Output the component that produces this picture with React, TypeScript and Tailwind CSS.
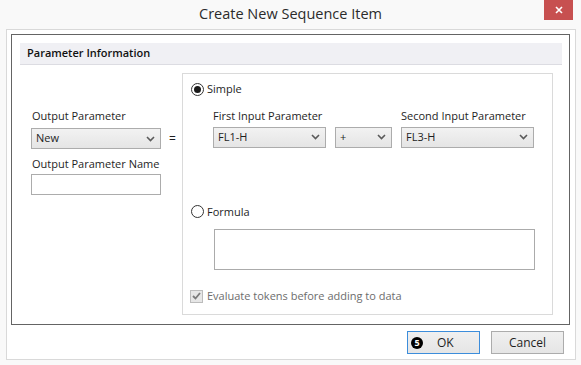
import React from 'react';

const font = { fontFamily: '"Open Sans", "Noto Sans", sans-serif' };

const Chevron = () => (
  <svg width="9" height="6" viewBox="0 0 9 6" className="shrink-0">
    <path d="M1 1 L4.5 4.5 L8 1" fill="none" stroke="#5a5a5a" strokeWidth="1.6" />
  </svg>
);

interface SelectProps {
  value: string;
  width: string;
}

const FakeSelect: React.FC<SelectProps> = ({ value, width }) => (
  <div
    className={`${width} h-[21px] flex items-center justify-between pl-[4px] pr-[5px] border border-[#acacac] bg-gradient-to-b from-[#f2f2f2] to-[#e5e5e5] text-[11px] text-[#1e1e1e]`}
  >
    <span>{value}</span>
    <Chevron />
  </div>
);

const Radio: React.FC<{ checked?: boolean }> = ({ checked }) => (
  <div className="w-[13px] h-[13px] rounded-full border border-[#333] bg-white flex items-center justify-center">
    {checked && <div className="w-[7px] h-[7px] rounded-full bg-[#1a1a1a]" />}
  </div>
);

export default function App() {
  return (
    <div className="w-[581px] h-[365px] bg-[#f9f9f9] flex flex-col text-[#1e1e1e]" style={font}>
      <div className="relative h-[29px] flex items-center justify-center">
        <span className="text-[14.5px] text-[#2b2b2b] leading-none -mt-[1px]">Create New Sequence Item</span>
        <div className="absolute right-[8px] top-0 w-[29px] h-[20px] bg-[#c75050] flex items-center justify-center">
          <svg width="8" height="8" viewBox="0 0 8 8">
            <path d="M1 1 L7 7 M7 1 L1 7" stroke="#fff" strokeWidth="1.6" />
          </svg>
        </div>
      </div>

      <div className="mx-[6px] w-[570px] h-[331px] border border-[#d9d9d9] bg-white flex flex-col">
        <div className="mt-[4px] ml-[4px] w-[559px] h-[291px] border border-[#646464] flex flex-col pt-[8px] pl-[8px] pr-[7px]">
          <div className="h-[22px] bg-[#f0f0f4] border-b border-[#dcdce2] flex items-center pl-[7px] text-[11px] font-semibold text-[#111]">
            Parameter Information
          </div>

          <div className="flex mt-[8px]">
            <div className="w-[162px] pl-[11px] pt-[35px] flex flex-col">
              <span className="text-[11px] leading-[16px] text-[#1e1e1e] pl-[1px]">Output Parameter</span>
              <div className="flex items-center mt-[4px]">
                <FakeSelect value="New" width="w-[130px]" />
                <span className="ml-[8px] text-[12px]">=</span>
              </div>
              <span className="text-[11px] leading-[16px] mt-[7px] pl-[1px]">Output Parameter Name</span>
              <div className="w-[130px] h-[21px] border border-[#acacac] bg-white mt-[2px]" />
            </div>

            <div className="w-[371px] h-[242px] border border-[#dadada] flex flex-col pl-[8px] pt-[7px]">
              <div className="flex items-center gap-[3px]">
                <Radio checked />
                <span className="text-[11px]">Simple</span>
              </div>
              <div className="flex gap-[9px] pl-[22px] mt-[10px]">
                <div className="flex flex-col">
                  <span className="text-[11px] leading-[16px] mb-[3px]">First Input Parameter</span>
                  <FakeSelect value="FL1-H" width="w-[113px]" />
                </div>
                <div className="flex flex-col">
                  <span className="h-[16px] mb-[3px]" />
                  <FakeSelect value="+" width="w-[57px]" />
                </div>
                <div className="flex flex-col">
                  <span className="text-[11px] leading-[16px] mb-[3px]">Second Input Parameter</span>
                  <FakeSelect value="FL3-H" width="w-[133px]" />
                </div>
              </div>

              <div className="flex items-center gap-[3px] mt-[56px]">
                <Radio />
                <span className="text-[11px]">Formula</span>
              </div>
              <div className="ml-[23px] mt-[9px] w-[321px] h-[41px] border border-[#ababab] bg-white" />

              <div className="flex items-center gap-[4px] mt-[18px] -ml-[1px]">
                <div className="w-[13px] h-[13px] border border-[#bcbcbc] bg-[#e6e6e6] flex items-center justify-center">
                  <svg width="9" height="8" viewBox="0 0 9 8">
                    <path d="M1 4 L3.5 6.5 L8 1" fill="none" stroke="#7a7a7a" strokeWidth="1.8" />
                  </svg>
                </div>
                <span className="text-[11px] text-[#6d6d6d]">Evaluate tokens before adding to data</span>
              </div>
            </div>
          </div>
        </div>

        <div className="flex justify-end gap-[11px] mt-[6px] pr-[11px]">
          <div className="w-[73px] h-[23px] border border-[#3c8ddb] bg-gradient-to-b from-[#f0f0f0] to-[#e5e5e5] flex items-center pl-[3px]">
            <div className="w-[12px] h-[12px] rounded-full bg-black text-white text-[9px] font-bold flex items-center justify-center leading-none">5</div>
            <span className="text-[12px] ml-[14px]">OK</span>
          </div>
          <div className="w-[73px] h-[23px] border border-[#acacac] bg-gradient-to-b from-[#f0f0f0] to-[#e5e5e5] flex items-center justify-center">
            <span className="text-[12px]">Cancel</span>
          </div>
        </div>
      </div>
    </div>
  );
}
